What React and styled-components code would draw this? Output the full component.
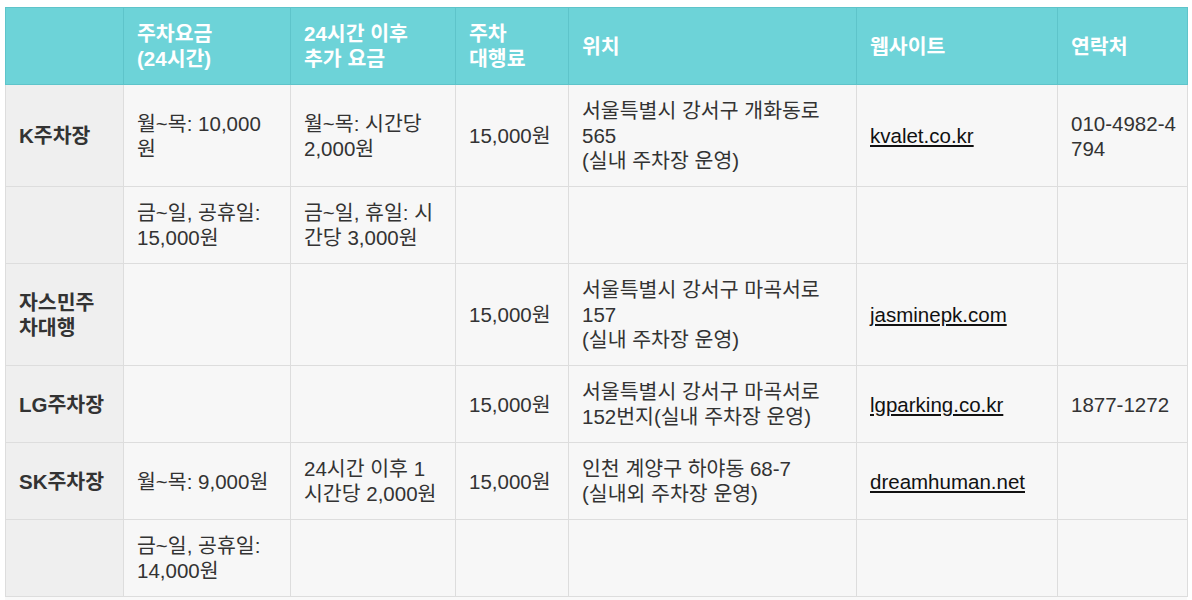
import React from "react"
import styled, { createGlobalStyle } from "styled-components"

const GlobalStyle = createGlobalStyle`
  body {
    margin: 0;
    background: #fff;
    font-family: "Liberation Sans", Arial, "Noto Sans CJK KR", sans-serif;
  }
`

const Wrapper = styled.div`
  margin: 7px 5px 0;
  background: #f9f9f9;
  padding-bottom: 20px;
`

const Table = styled.table`
  width: 1182px;
  table-layout: fixed;
  border-collapse: collapse;
  font-size: 20.5px;
  line-height: 25px;
  color: #333;
`

const HeadCell = styled.th`
  background: #6dd3d8;
  color: #fff;
  font-weight: bold;
  text-align: left;
  vertical-align: middle;
  padding: 13px 13px;
  border: 1px solid #5ec4ca;
`

const Cell = styled.td`
  background: ${({ $label }) => ($label ? "#efefef" : "#f7f7f7")};
  font-weight: ${({ $label }) => ($label ? "bold" : "normal")};
  vertical-align: middle;
  padding: 13px 13px;
  border: 1px solid #dddddd;
`

const Line = styled.span`
  display: block;
  white-space: nowrap;
`

const SiteLink = styled.a`
  color: #111;
  text-decoration: underline;
`

const widths = [118, 167, 165, 113, 288, 201, 130]

const headers = [
  [],
  ["주차요금", "(24시간)"],
  ["24시간 이후", "추가 요금"],
  ["주차", "대행료"],
  ["위치"],
  ["웹사이트"],
  ["연락처"],
]

// each cell is a list of lines, as they wrap in the original layout
const rows = [
  [["K주차장"], ["월~목: 10,000", "원"], ["월~목: 시간당", "2,000원"], ["15,000원"], ["서울특별시 강서구 개화동로", "565", "(실내 주차장 운영)"], ["kvalet.co.kr"], ["010-4982-4", "794"]],
  [[], ["금~일, 공휴일:", "15,000원"], ["금~일, 휴일: 시", "간당 3,000원"], [], [], [], []],
  [["자스민주", "차대행"], [], [], ["15,000원"], ["서울특별시 강서구 마곡서로", "157", "(실내 주차장 운영)"], ["jasminepk.com"], []],
  [["LG주차장"], [], [], ["15,000원"], ["서울특별시 강서구 마곡서로", "152번지(실내 주차장 운영)"], ["lgparking.co.kr"], ["1877-1272"]],
  [["SK주차장"], ["월~목: 9,000원"], ["24시간 이후 1", "시간당 2,000원"], ["15,000원"], ["인천 계양구 하야동 68-7", "(실내외 주차장 운영)"], ["dreamhuman.net"], []],
  [[], ["금~일, 공휴일:", "14,000원"], [], [], [], [], []],
]

const renderLines = lines => lines.map((line, i) => <Line key={i}>{line}</Line>)

const App = () => (
  <>
    <GlobalStyle />
    <Wrapper>
      <Table>
        <colgroup>
          {widths.map((w, i) => (
            <col key={i} style={{ width: w }} />
          ))}
        </colgroup>
        <thead>
          <tr>
            {headers.map((h, i) => (
              <HeadCell key={i}>{renderLines(h)}</HeadCell>
            ))}
          </tr>
        </thead>
        <tbody>
          {rows.map((row, r) => (
            <tr key={r}>
              {row.map((lines, c) => (
                <Cell key={c} $label={c === 0}>
                  {c === 5 && lines.length ? (
                    <SiteLink href="#">{lines[0]}</SiteLink>
                  ) : (
                    renderLines(lines)
                  )}
                </Cell>
              ))}
            </tr>
          ))}
        </tbody>
      </Table>
    </Wrapper>
  </>
)

export default App
